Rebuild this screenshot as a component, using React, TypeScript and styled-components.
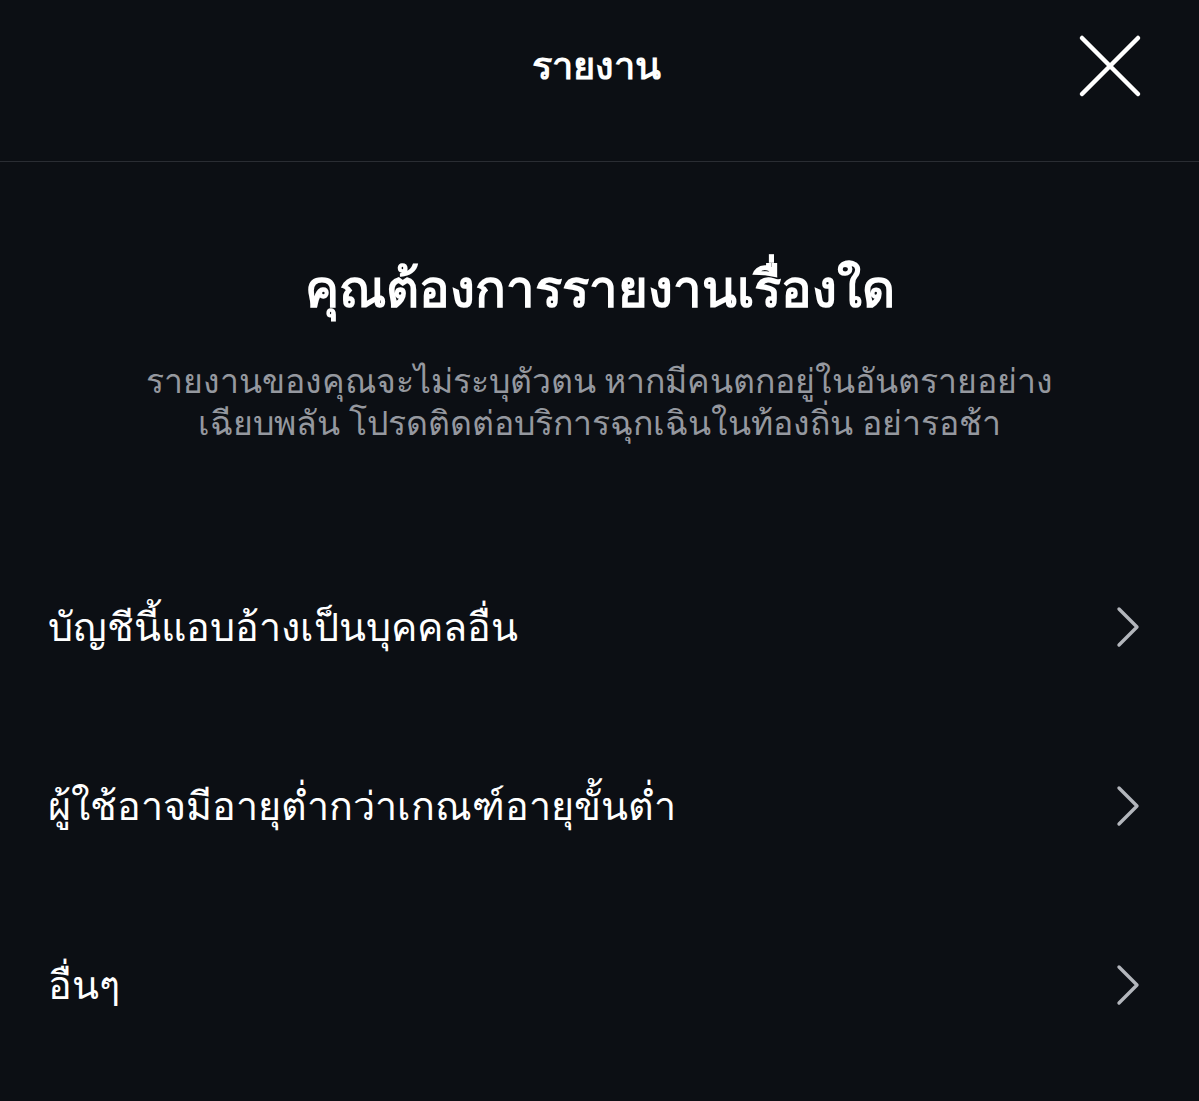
import React from "react";
import styled, { createGlobalStyle } from "styled-components";

const Global = createGlobalStyle`
  html, body { margin: 0; padding: 0; background: #0c0f14; }
  body { font-family: "Noto Sans", "DejaVu Sans", sans-serif; color: #ffffff; }
  * { box-sizing: border-box; }
`;

const Page = styled.div`
  width: 1199px;
  height: 1101px;
  background: #0c0f14;
  display: flex;
  flex-direction: column;
  overflow: hidden;
`;

const Header = styled.header`
  height: 162px;
  flex-shrink: 0;
  display: grid;
  grid-template-columns: 1fr auto 1fr;
  align-items: center;
  padding: 0 56px 30px 56px;
  border-bottom: 1px solid #2a2d33;
`;

const HeaderTitle = styled.h1`
  grid-column: 2;
  margin: 0 0 0 -6px;
  font-size: 38px;
  font-weight: 700;
  color: #ffffff;
`;

const CloseButton = styled.button`
  grid-column: 3;
  justify-self: end;
  background: none;
  border: none;
  padding: 0;
  width: 64px;
  height: 64px;
  display: flex;
  align-items: center;
  justify-content: center;
  cursor: pointer;
  margin-right: 1px;
`;

const Intro = styled.section`
  display: flex;
  flex-direction: column;
  align-items: center;
  text-align: center;
  padding: 91px 80px 0;
`;

const Heading = styled.h2`
  margin: 0;
  font-size: 51px;
  font-weight: 700;
  line-height: 68px;
  color: #ffffff;
`;

const Sub = styled.p`
  margin: 38px 0 0;
  font-size: 33.8px;
  line-height: 42px;
  color: #95989f;
  max-width: 1000px;
`;

const List = styled.ul`
  list-style: none;
  margin: 94px 0 0;
  padding: 0;
  display: flex;
  flex-direction: column;
`;

const Row = styled.li`
  height: 179px;
  display: flex;
  align-items: center;
  justify-content: space-between;
  padding: 0 56px 0 48px;
`;

const RowText = styled.span`
  font-size: 39.5px;
  color: #ffffff;
`;

const Chevron = () => (
  <svg width="30" height="44" viewBox="0 0 30 44" fill="none">
    <path d="M6 4 L24 22 L6 40" stroke="#b3b6bc" strokeWidth="3.4" strokeLinecap="round" strokeLinejoin="round" />
  </svg>
);

const CloseIcon = () => (
  <svg width="64" height="64" viewBox="0 0 64 64" fill="none">
    <path d="M4 4 L60 60 M60 4 L4 60" stroke="#ffffff" strokeWidth="4.5" strokeLinecap="round" />
  </svg>
);

const items = [
  "บัญชีนี้แอบอ้างเป็นบุคคลอื่น",
  "ผู้ใช้อาจมีอายุต่ำกว่าเกณฑ์อายุขั้นต่ำ",
  "อื่นๆ",
];

export default function App() {
  return (
    <Page>
      <Global />
      <Header>
        <HeaderTitle>รายงาน</HeaderTitle>
        <CloseButton aria-label="close">
          <CloseIcon />
        </CloseButton>
      </Header>
      <Intro>
        <Heading>คุณต้องการรายงานเรื่องใด</Heading>
        <Sub>
          รายงานของคุณจะไม่ระบุตัวตน หากมีคนตกอยู่ในอันตรายอย่าง
          <br />
          เฉียบพลัน โปรดติดต่อบริการฉุกเฉินในท้องถิ่น อย่ารอช้า
        </Sub>
      </Intro>
      <List>
        {items.map((t) => (
          <Row key={t}>
            <RowText>{t}</RowText>
            <Chevron />
          </Row>
        ))}
      </List>
    </Page>
  );
}
